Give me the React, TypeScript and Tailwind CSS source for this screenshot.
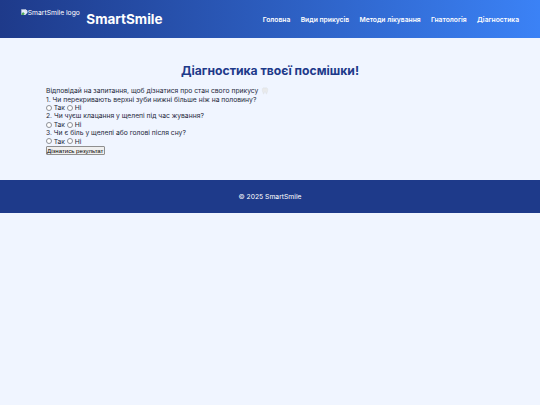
const navLinks = [
  { label: "Головна", width: "w-[27.3px]" },
  { label: "Види прикусів", width: "w-[48.3px]" },
  { label: "Методи лікування", width: "w-[61px]" },
  { label: "Гнатологія", width: "w-[35.7px]" },
  { label: "Діагностика", width: "w-[41.9px]" },
];

const questions = [
  "1. Чи перекривають верхні зуби нижні більше ніж на половину?",
  "2. Чи чуєш клацання у щелепі під час жування?",
  "3. Чи є біль у щелепі або голові після сну?",
];

function LogoFallback() {
  return (
    <div className="flex h-[21px] w-[59px] items-start text-[6.75px] leading-[8.4px]">
      <svg viewBox="0 0 16 16" className="h-[6.75px] w-[6.75px] shrink-0">
        <path d="M1 1h10l4 4v4l-5 5H1z" fill="#e5edfb" stroke="#c3cede" />
        <path d="M1 12l4-5 4 4-3 3H1z" fill="#4ca85b" />
        <path d="M11 1v4h4" fill="#fff" stroke="#c3cede" />
      </svg>
      <span className="whitespace-nowrap">SmartSmile logo</span>
    </div>
  );
}

function ToothIcon() {
  return (
    <svg viewBox="0 0 16 16" className="ml-[2.5px] h-[8px] w-[8px]">
      <path
        d="M4 2c2-1 3 0 4 0s2-1 4 0c3 2 1 5 1 7-1 2-1 5-2 5-2 0-1-5-3-5s-1 5-3 5c-1 0-1-3-2-5 0-2-2-5 1-7z"
        fill="#e9eaeb"
        stroke="#d8dce2"
        strokeWidth="0.7"
      />
    </svg>
  );
}

function Radio({ name, label }: { name: string; label: string }) {
  return (
    <label className="flex h-[8.4px] items-center">
      <input
        type="radio"
        name={name}
        className="mr-[1.9px] mb-[0.8px] h-[6px] w-[5.8px] appearance-none rounded-full border-[0.5px] border-[#8d9097] bg-white checked:bg-blue-600"
      />
      {label}
    </label>
  );
}

export default function App() {
  return (
    <div className="min-h-screen bg-[#f0f5ff] font-['Inter',sans-serif] text-[6.75px] leading-[8.4px] text-[#1e293b]">
      <header className="flex h-[38px] items-center justify-between bg-linear-to-r from-[#1e3a8a] to-[#3b82f6] px-[21px] text-white">
        <div className="flex items-center gap-[6.3px]">
          <LogoFallback />
          <h1 className="text-[13.5px] leading-[17px] font-bold">SmartSmile</h1>
        </div>
        <nav className="mt-[2px] flex gap-[10.5px] font-semibold">
          {navLinks.map((link) => (
            <a key={link.label} href="#" className={`${link.width} whitespace-nowrap`}>
              {link.label}
            </a>
          ))}
        </nav>
      </header>

      <main className="h-[142px] px-[46px] pt-[25px]">
        <h2 className="mb-[8px] text-center text-[12.16px] leading-[16px] font-bold text-[#1e3a8a]">
          Діагностика твоєї посмішки!
        </h2>
        <p className="flex h-[8.5px] items-center whitespace-nowrap">
          Відповідай на запитання, щоб дізнатися про стан свого прикусу
          <ToothIcon />
        </p>
        <form>
          {questions.map((question, i) => (
            <div key={question}>
              <p>{question}</p>
              <div className="flex gap-[2px]">
                <Radio name={`q${i}`} label="Так" />
                <Radio name={`q${i}`} label="Ні" />
              </div>
            </div>
          ))}
          <button
            type="button"
            className="mt-[0.2px] flex h-[8.5px] w-[58.5px] items-center justify-center rounded-[1px] border border-[#8f8f8f] bg-[#efefef] font-['Liberation_Sans',sans-serif] text-[6.1px] leading-[7px] whitespace-nowrap text-black"
          >
            Дізнатись результат
          </button>
        </form>
      </main>

      <footer className="flex h-[33.4px] items-center justify-center bg-[#1e3a8a] text-white">
        <p className="mt-[1px]">© 2025 SmartSmile</p>
      </footer>
    </div>
  );
}
